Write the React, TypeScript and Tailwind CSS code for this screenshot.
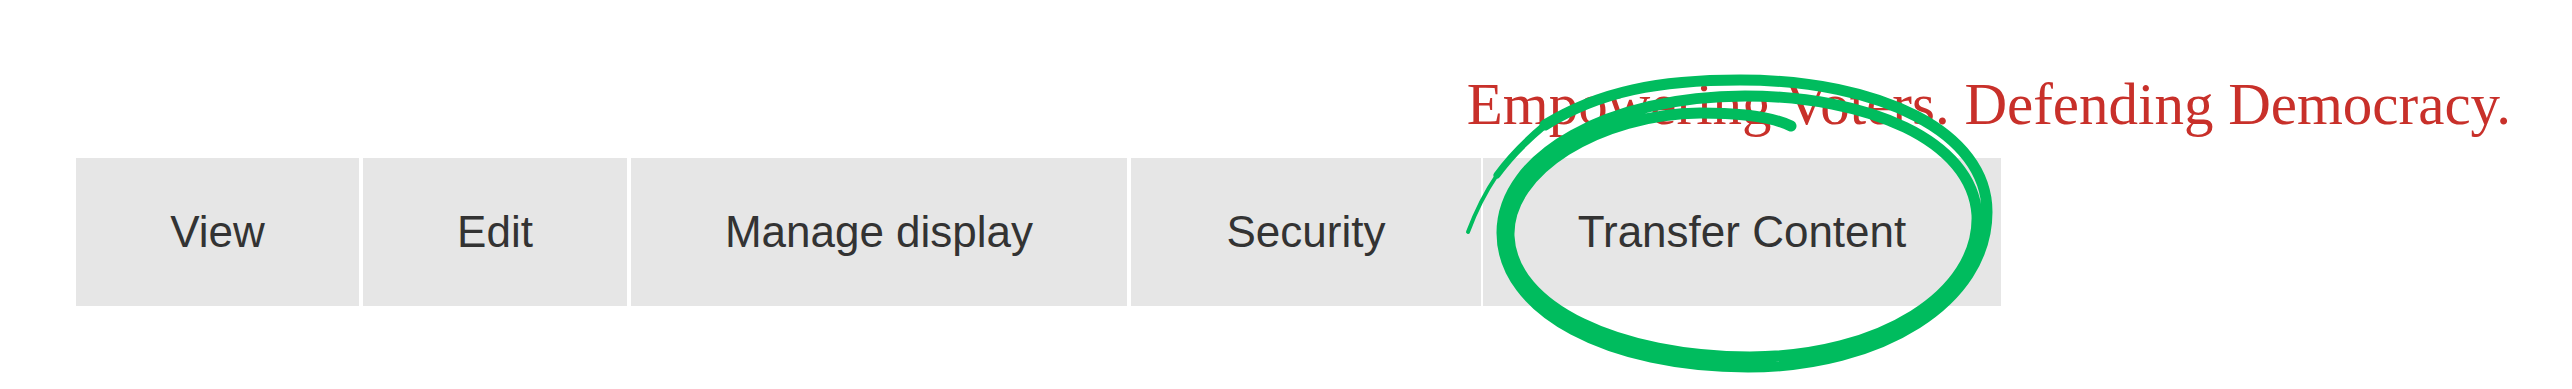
import React from "react";

const tabs = [
  { label: "View", w: "w-[283px]", mr: "mr-[4px]" },
  { label: "Edit", w: "w-[264px]", mr: "mr-[4px]" },
  { label: "Manage display", w: "w-[496px]", mr: "mr-[4px]" },
  { label: "Security", w: "w-[350px]", mr: "mr-[2px]" },
  { label: "Transfer Content", w: "w-[518px]", mr: "mr-0" },
];

export default function App() {
  return (
    <div className="relative h-[389px] w-full overflow-hidden bg-white">
      <div className="flex justify-end pr-[61px] pt-[75px]">
        <p
          className="text-[59px] leading-[58px] text-[#c8302a] whitespace-nowrap"
          style={{ fontFamily: '"Liberation Serif", "Times New Roman", serif' }}
        >
          Empowering Voters. Defending Democracy.
        </p>
      </div>
      <nav className="mt-[25px] flex pl-[76px]">
        {tabs.map((t) => (
          <a
            key={t.label}
            className={`${t.w} ${t.mr} flex h-[148px] items-center justify-center bg-[#e6e6e6] text-[44px] text-[#333333] whitespace-nowrap`}
            style={{ fontFamily: '"Liberation Sans", Arial, sans-serif' }}
          >
            {t.label}
          </a>
        ))}
      </nav>
      <svg
        className="pointer-events-none absolute left-0 top-0"
        width="2572"
        height="389"
        viewBox="0 0 2572 389"
        fill="none"
      >
        <g stroke="#00bc5e" strokeLinecap="round" strokeLinejoin="round" fill="none">
          <path d="M1468,232 Q1480,200 1497,175" strokeWidth="4" />
          <path d="M1497,175 Q1515,150 1545,125" strokeWidth="7" />
          <path
            d="M1545,125 C1600,91 1660,80 1740,80 C1880,80 1987,132 1987,212 C1987,302 1880,367 1748,367 C1610,367 1502,312 1502,233 C1502,155 1610,96 1745,96 C1868,96 1972,140 1977,215 C1980,294 1880,357 1750,357 C1620,357 1512,308 1509,236 C1507,170 1600,114 1700,113 C1745,113 1775,118 1791,126"
            strokeWidth="11"
          />
        </g>
      </svg>
    </div>
  );
}
